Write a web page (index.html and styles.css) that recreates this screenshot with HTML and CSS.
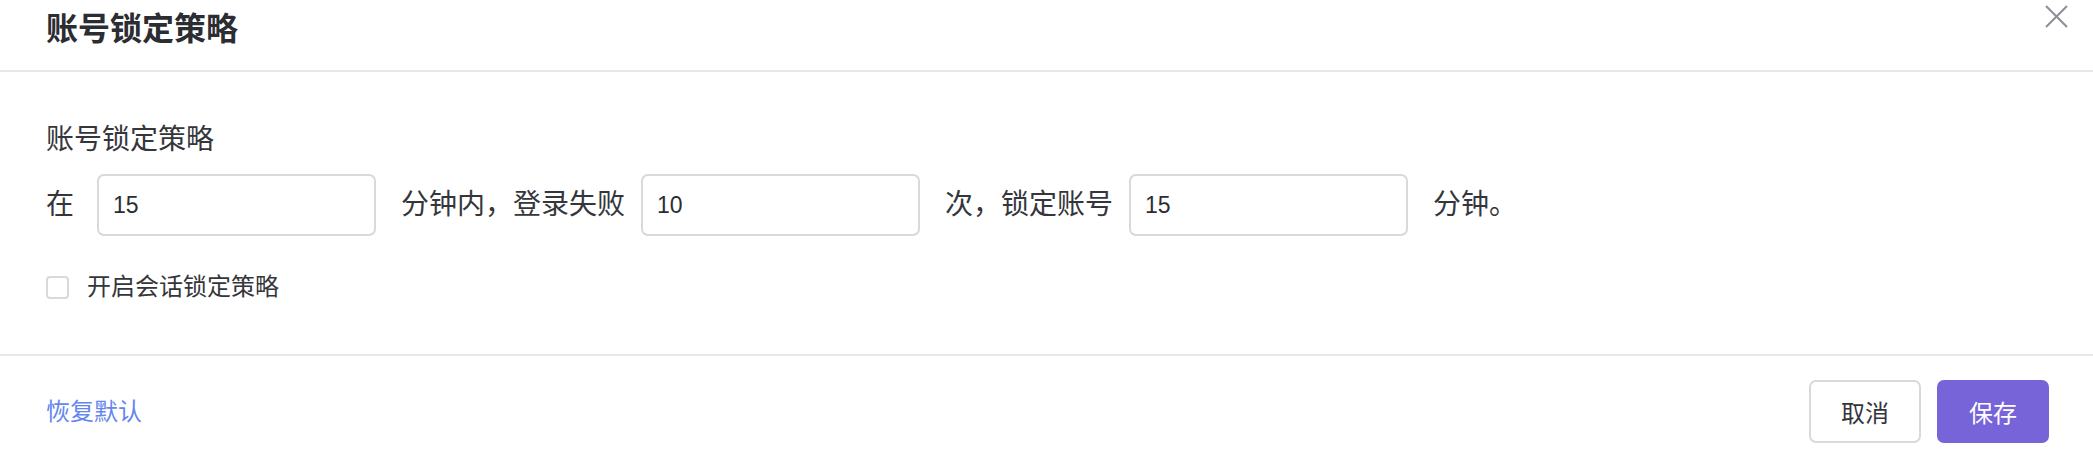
FILE: index.html
```html
<!DOCTYPE html>
<html lang="zh-CN">
<head>
    <meta charset="UTF-8">
    <meta name="viewport" content="width=device-width, initial-scale=1.0">
    <title>账号锁定策略</title>
    <link rel="stylesheet" href="styles.css">
</head>
<body>
    <div class="dialog">
        <div class="dialog-header">
            <h2>账号锁定策略</h2>
            <button class="close-button" aria-label="关闭">
                <svg width="23" height="23" viewBox="0 0 23 23">
                    <path d="M1 1 L22 22 M22 1 L1 22" stroke="#8d8f96" stroke-width="2" fill="none"/>
                </svg>
            </button>
        </div>

        <div class="dialog-body">
            <div class="field-label">账号锁定策略</div>
            <div class="policy-row">
                <span class="text first">在</span>
                <input type="text" class="num-input" value="15">
                <span class="text">分钟内，登录失败</span>
                <input type="text" class="num-input" value="10">
                <span class="text">次，锁定账号</span>
                <input type="text" class="num-input" value="15">
                <span class="text">分钟。</span>
            </div>
            <label class="check-row">
                <span class="checkbox"></span>
                <span>开启会话锁定策略</span>
            </label>
        </div>

        <div class="dialog-footer">
            <a href="#" class="reset-link">恢复默认</a>
            <div class="actions">
                <button class="btn btn-cancel">取消</button>
                <button class="btn btn-save">保存</button>
            </div>
        </div>
    </div>
</body>
</html>
```

FILE: styles.css
```css
/* Global Styles */
body {
    margin: 0;
    background-color: #ffffff;
    font-family: "Liberation Sans", "Noto Sans CJK SC", sans-serif;
    color: #35363b;
}

.dialog {
    position: relative;
    width: 100%;
    height: 460px;
    overflow: hidden;
}

/* Header */
.dialog-header {
    height: 72px;
    padding: 7px 46px 0;
    box-sizing: border-box;
    border-bottom: 2px solid #e8e8e8;
}

.dialog-header h2 {
    margin: 0;
    font-size: 32px;
    line-height: 44px;
    font-weight: bold;
    color: #2b2d33;
}

.close-button {
    position: absolute;
    top: 5px;
    right: 25px;
    width: 23px;
    height: 23px;
    padding: 0;
    border: none;
    background: none;
    cursor: pointer;
}

.close-button svg {
    display: block;
}

/* Body */
.dialog-body {
    height: 282px;
    padding: 48px 46px 0;
    box-sizing: border-box;
}

.field-label {
    font-size: 28px;
    line-height: 40px;
    margin-bottom: 14px;
}

.policy-row {
    display: flex;
    align-items: center;
    height: 62px;
}

.policy-row .text {
    font-size: 28px;
    line-height: 40px;
    margin: 0 16px 0 25px;
    white-space: nowrap;
}

.policy-row .text.first {
    margin-left: 0;
    margin-right: 23px;
}

.num-input {
    width: 279px;
    height: 62px;
    padding: 0 14px;
    box-sizing: border-box;
    border: 2px solid #d9d9dd;
    border-radius: 7px;
    font-family: "Liberation Sans", "Noto Sans CJK SC", sans-serif;
    font-size: 23px;
    color: #2b2d33;
    outline: none;
}

.check-row {
    display: flex;
    align-items: center;
    margin-top: 31px;
    font-size: 24px;
    line-height: 40px;
    cursor: pointer;
}

.checkbox {
    width: 23px;
    height: 23px;
    box-sizing: border-box;
    border: 2px solid #d9d9d9;
    border-radius: 4px;
    margin-right: 18px;
}

/* Footer */
.dialog-footer {
    display: flex;
    justify-content: space-between;
    align-items: center;
    border-top: 2px solid #e8e8e8;
    padding: 24px 44px 0 46px;
}

.reset-link {
    font-size: 24px;
    line-height: 40px;
    color: #6486ee;
    text-decoration: none;
}

.actions {
    display: flex;
    gap: 16px;
}

.btn {
    width: 112px;
    height: 63px;
    box-sizing: border-box;
    border-radius: 7px;
    font-family: "Liberation Sans", "Noto Sans CJK SC", sans-serif;
    font-size: 24px;
    cursor: pointer;
}

.btn-cancel {
    background: #ffffff;
    border: 2px solid #d9d9d9;
    color: #35363b;
}

.btn-save {
    background: #7764d9;
    border: none;
    color: #ffffff;
}
```
